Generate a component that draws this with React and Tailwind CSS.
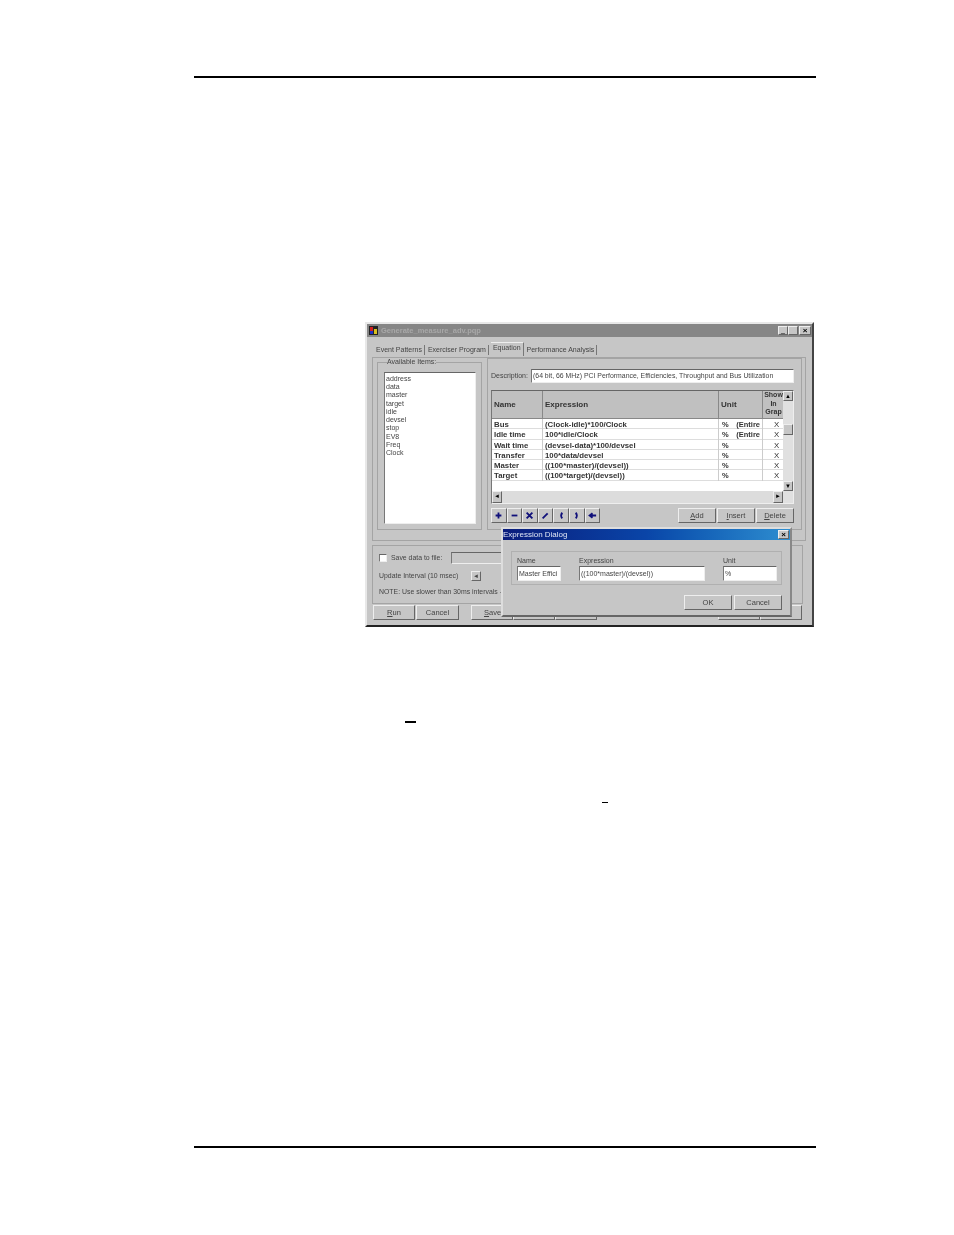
const FONT = "font-['Liberation_Sans',Arial,sans-serif]";

const ITEMS = ["address", "data", "master", "target", "idle", "devsel", "stop", "EV8", "Freq", "Clock"];

const ROWS = [
  ["Bus", "(Clock-idle)*100/Clock", "%", "(Entire", "X"],
  ["Idle time", "100*idle/Clock", "%", "(Entire", "X"],
  ["Wait time", "(devsel-data)*100/devsel", "%", "", "X"],
  ["Transfer", "100*data/devsel", "%", "", "X"],
  ["Master", "((100*master)/(devsel))", "%", "", "X"],
  ["Target", "((100*target)/(devsel))", "%", "", "X"],
];

const TOOLS = [
  "M5 9h8M9 5v8",
  "M5 9h8",
  "M5 5l8 8M13 5l-8 8",
  "M5 13l7-7",
  "M10 5Q7 9 10 13",
  "M8 5Q11 9 8 13",
  "M14 9H6M9 6L5 9l4 3",
];

const raised = "border border-t-[#eee] border-l-[#eee] border-r-[#666] border-b-[#666]";
const sunken = "border border-t-[#666] border-l-[#777] border-r-[#eee] border-b-[#eee]";
const etched = "border border-[#a4a4a4]";

function WinButton({ children, className = "" }) {
  return (
    <button className={`${raised} bg-[#c6c6c6] h-[15px] text-[7.5px] leading-none text-[#444] flex items-center justify-center ${className}`}>
      {children}
    </button>
  );
}

function Tab({ label, active, className = "" }) {
  return (
    <span className={`text-[7px] text-[#444] whitespace-nowrap px-[2px] border-r border-[#777] ${active ? "pb-[2px] -mt-[2px] border-t border-t-[#eee]" : ""} ${className}`}>
      {label}
    </span>
  );
}

function ExpressionDialog() {
  return (
    <div className="absolute left-[134px] top-[203px] w-[291px] h-[90px] bg-[#c6c6c6] border-2 border-t-[#ddd] border-l-[#ddd] border-r-[#888] border-b-[#666]">
      <div className="h-[11px] bg-gradient-to-r from-[#0a1c7c] via-[#0a45a8] to-[#2f8ed0] flex items-center justify-between pr-[1px]">
        <span className="text-[8px] text-[#dfe6f5]">Expression Dialog</span>
        <span className={`w-[11px] h-[9px] bg-[#c6c6c6] ${raised} text-[8px] leading-[7px] text-center font-bold`}>×</span>
      </div>
      <div className="ml-[8px] mt-[11px] w-[271px] h-[34px] border border-[#b0b0b0] pl-[5px] pt-[4px] flex gap-[18px]">
        <div className="w-[44px]">
          <div className="text-[7px] leading-[10px] text-[#444]">Name</div>
          <div className={`${sunken} bg-white h-[15px] text-[7px] leading-[13px] pl-[1px] text-[#444] whitespace-nowrap overflow-hidden`}>Master Effici</div>
        </div>
        <div className="w-[126px]">
          <div className="text-[7px] leading-[10px] text-[#444]">Expression</div>
          <div className={`${sunken} bg-white h-[15px] text-[7px] leading-[13px] pl-[1px] text-[#444] whitespace-nowrap`}>((100*master)/(devsel))</div>
        </div>
        <div className="w-[54px]">
          <div className="text-[7px] leading-[10px] text-[#444]">Unit</div>
          <div className={`${sunken} bg-white h-[15px] text-[7px] leading-[13px] pl-[1px] text-[#444]`}>%</div>
        </div>
      </div>
      <div className="flex justify-end gap-[2px] mt-[10px] mr-[8px]">
        <WinButton className="w-[48px] border-[#333]">OK</WinButton>
        <WinButton className="w-[48px]">Cancel</WinButton>
      </div>
    </div>
  );
}

function AppWindow() {
  return (
    <div className={`relative w-[449px] h-[305px] bg-[#c6c6c6] border-2 border-t-[#e8e8e8] border-l-[#e8e8e8] border-r-[#444] border-b-[#222] overflow-hidden blur-[0.5px] ${FONT}`}>
      {/* title bar */}
      <div className="h-[13px] bg-[#868686] flex items-center justify-between pl-[2px] pr-[1px]">
        <div className="flex items-center gap-[3px]">
          <svg width="9" height="9" viewBox="0 0 9 9">
            <rect width="9" height="9" fill="#222" />
            <rect x="1" y="1" width="3" height="4" fill="#d02020" />
            <rect x="5" y="3" width="3" height="5" fill="#d8c020" />
            <rect x="1" y="5" width="3" height="3" fill="#2030c0" />
          </svg>
          <span className="text-[7.5px] font-bold text-[#a8a8a8]">Generate_measure_adv.pqp</span>
        </div>
        <div className="flex items-center">
          <span className={`${raised} w-[10px] h-[9px] bg-[#c6c6c6] text-[7px] leading-[5px] text-center`}>_</span>
          <span className={`${raised} w-[10px] h-[9px] bg-[#c6c6c6]`} />
          <span className={`${raised} w-[12px] h-[9px] bg-[#c6c6c6] text-[8px] leading-[7px] text-center font-bold ml-[1px]`}>×</span>
        </div>
      </div>

      {/* tabs */}
      <div className="flex items-center gap-[1px] pl-[7px] mt-[6px] h-[14px]">
        <Tab label="Event Patterns" />
        <Tab label="Exerciser Program" />
        <Tab label="Equation" active className="ml-[1px]" />
        <Tab label="Performance Analysis" />
      </div>

      {/* upper group */}
      <div className={`ml-[5px] w-[434px] h-[184px] ${etched} flex gap-[5px] pl-[4px]`}>
        <fieldset className="w-[105px] h-[172px] border border-[#a4a4a4] px-[3px]">
          <legend className="text-[7px] leading-[8px] text-[#444] ml-[6px]">Available Items:</legend>
          <div className={`${sunken} bg-white w-[92px] h-[152px] ml-[3px] mt-[6px] pl-[1px] pt-[2px] text-[7px] leading-[8.22px] text-[#444]`}>
            {ITEMS.map((item) => (
              <div key={item}>{item}</div>
            ))}
          </div>
        </fieldset>

        <div className={`w-[315px] h-[172px] ${etched} pl-[3px] pr-[7px] pt-[10px]`}>
          <div className="flex items-center h-[14px]">
            <span className="text-[7px] text-[#444] w-[40px] whitespace-nowrap">Description:</span>
            <div className={`${sunken} bg-white flex-1 h-[14px] text-[6.9px] leading-[12px] text-[#444] pl-[1px] whitespace-nowrap overflow-hidden`}>
              (64 bit, 66 MHz) PCI Performance, Efficiencies, Throughput and Bus Utilization
            </div>
          </div>

          {/* grid */}
          <div className={`${sunken} mt-[7px] h-[114px] flex`}>
            <div className="flex-1 flex flex-col">
              <div className="grid grid-cols-[51px_176px_44px_1fr] h-[28px] bg-[#c0c0c0] border-b border-[#888] text-[8px] font-bold text-[#333]">
                <span className="flex items-center pl-[2px] border-r border-[#888]">Name</span>
                <span className="flex items-center pl-[2px] border-r border-[#888]">Expression</span>
                <span className="flex items-center pl-[2px] border-r border-[#888]">Unit</span>
                <span className="text-center text-[7px] leading-[8.5px] pl-[1px] whitespace-nowrap">Show<br />In<br />Grap</span>
              </div>
              <div className="flex-1 bg-white">
                {ROWS.map(([name, expr, unit, range, show]) => (
                  <div key={name} className="grid grid-cols-[51px_176px_44px_1fr] h-[10.3px] text-[7.8px] leading-[11px] font-bold text-[#333] border-b border-[#ddd]">
                    <span className="pl-[2px] border-r border-[#ccc] whitespace-nowrap">{name}</span>
                    <span className="pl-[2px] border-r border-[#ccc] whitespace-nowrap">{expr}</span>
                    <span className="pl-[3px] border-r border-[#ccc] whitespace-nowrap flex justify-between pr-[2px] text-[7.5px]"><span>{unit}</span><span>{range}</span></span>
                    <span className="text-center font-normal pl-[7px]">{show}</span>
                  </div>
                ))}
              </div>
              <div className="h-[12px] bg-[#dcdcdc] flex justify-between">
                <span className={`${raised} w-[10px] bg-[#c6c6c6] text-[6px] leading-[9px] text-center`}>◄</span>
                <span className={`${raised} w-[10px] bg-[#c6c6c6] text-[6px] leading-[9px] text-center`}>►</span>
              </div>
            </div>
            <div className="w-[10px] bg-[#e0e0e0] flex flex-col justify-between">
              <div>
                <span className={`${raised} block h-[10px] bg-[#c6c6c6] text-[6px] leading-[8px] text-center`}>▲</span>
                <span className={`${raised} block h-[11px] mt-[23px] bg-[#c6c6c6]`} />
              </div>
              <span className={`${raised} block h-[10px] mb-[12px] bg-[#c6c6c6] text-[6px] leading-[8px] text-center`}>▼</span>
            </div>
          </div>

          {/* toolbar */}
          <div className="flex items-center justify-between mt-[4px]">
            <div className="flex">
              {TOOLS.map((d) => (
                <span key={d} className={`${raised} w-[15.6px] h-[15px] bg-[#c6c6c6] flex items-center justify-center`}>
                  <svg width="13" height="13" viewBox="0 0 18 18" fill="none" stroke="#10107a" strokeWidth="2.5">
                    <path d={d} />
                  </svg>
                </span>
              ))}
            </div>
            <div className="flex gap-[1px]">
              <WinButton className="w-[38px]"><span><span className="underline">A</span>dd</span></WinButton>
              <WinButton className="w-[38px]"><span><span className="underline">I</span>nsert</span></WinButton>
              <WinButton className="w-[38px]"><span><span className="underline">D</span>elete</span></WinButton>
            </div>
          </div>
        </div>
      </div>

      {/* lower group */}
      <div className={`ml-[5px] mt-[4px] w-[431px] h-[59px] ${etched} pl-[6px] pt-[5px] text-[6.9px] leading-[10px] text-[#444]`}>
        <div className="flex items-center h-[14px]">
          <span className={`${sunken} w-[8px] h-[8px] bg-white mr-[4px]`} />
          <span className="w-[60px] whitespace-nowrap">Save data to file:</span>
          <span className={`${sunken} w-[60px] h-[12px]`} />
        </div>
        <div className="flex items-center h-[17px] mt-[2px]">
          <span className="w-[92px] whitespace-nowrap">Update Interval (10 msec)</span>
          <span className={`${raised} w-[10px] h-[10px] text-[6px] leading-[8px] text-center`}>◄</span>
        </div>
        <div className="mt-[3px] whitespace-nowrap">NOTE: Use slower than 30ms intervals -</div>
      </div>

      {/* bottom buttons */}
      <div className="flex pl-[6px] mt-[1px]">
        <WinButton className="w-[42px]"><span><span className="underline">R</span>un</span></WinButton>
        <WinButton className="w-[43px] ml-[1px]">Cancel</WinButton>
        <WinButton className="w-[42px] ml-[12px] justify-start pl-[12px]"><span><span className="underline">S</span>ave</span></WinButton>
        <WinButton className="w-[42px] border-b-[#222]" />
        <WinButton className="w-[42px] border-b-[#222]" />
        <WinButton className="w-[42px] ml-[121px] border-b-[#222]" />
        <WinButton className="w-[42px] border-b-[#222]" />
      </div>

      <ExpressionDialog />
    </div>
  );
}

export default function App() {
  return (
    <div className="w-[954px] h-[1235px] bg-white overflow-hidden">
      <div className="ml-[194px] mt-[76px] w-[622px] h-[2px] bg-black" />
      <div className="ml-[365px] mt-[244px]">
        <AppWindow />
      </div>
      <div className="ml-[405px] mt-[94px] w-[11px] h-[2px] bg-black" />
      <div className="ml-[602px] mt-[79px] w-[6px] h-[1px] bg-black" />
      <div className="ml-[194px] mt-[343px] w-[622px] h-[2px] bg-black" />
    </div>
  );
}
